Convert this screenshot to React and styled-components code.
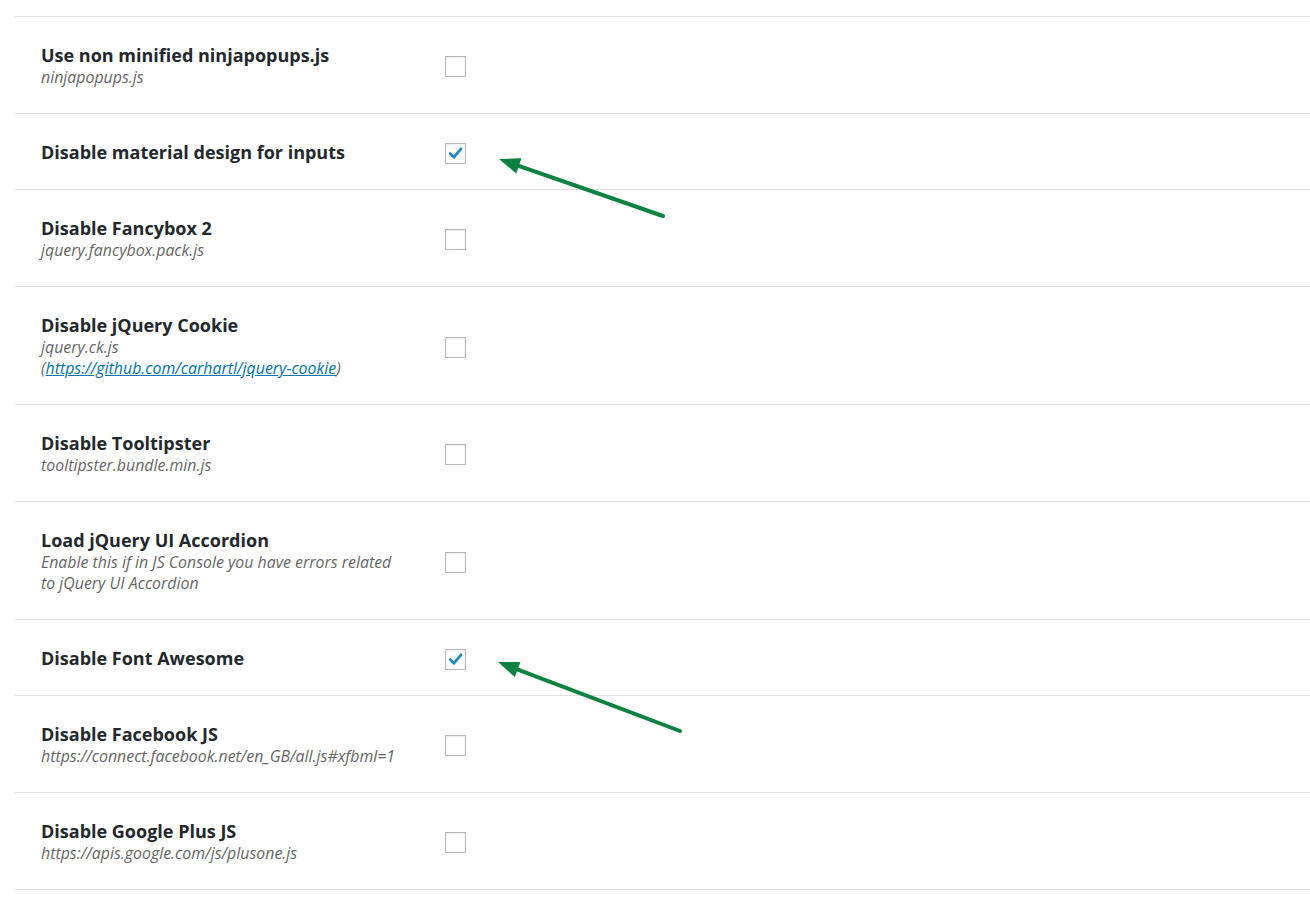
import React from "react";
import styled, { createGlobalStyle } from "styled-components";

const Global = createGlobalStyle`
  html, body { margin: 0; padding: 0; background: #ffffff; }
  body { font-family: "Open Sans", "Noto Sans", sans-serif; color: #23282d; }
`;

const Page = styled.div`
  position: relative;
  padding: 16px 0 0 15px;
  min-height: 902px;
  box-sizing: border-box;
`;

const Table = styled.div`
  border-bottom: 1px solid #e1e1e1;
`;

const Row = styled.div`
  display: grid;
  grid-template-columns: 430px 1fr;
  align-items: center;
  border-top: 1px solid #e1e1e1;
`;

const Label = styled.div`
  padding: 26px 0 25px 26px;
`;

const Title = styled.div`
  font-size: 18px;
  font-weight: 700;
  line-height: 24px;
  color: #23282d;
  white-space: nowrap;
`;

const Desc = styled.div`
  font-size: 15.9px;
  font-style: italic;
  line-height: 21px;
  color: #666666;
  max-width: 360px;
`;

const Link = styled.a`
  color: #0073aa;
  text-decoration: underline;
`;

const Box = styled.span`
  display: inline-flex;
  align-items: center;
  justify-content: center;
  width: 19px;
  height: 19px;
  margin-top: 3px;
  border: 1px solid #b4b9be;
  background: #ffffff;
  box-shadow: inset 0 1px 2px rgba(0, 0, 0, 0.07);
  justify-self: start;
`;

const Overlay = styled.svg`
  position: absolute;
  left: 0;
  top: 0;
  pointer-events: none;
`;

const Check = () => (
  <svg width="17" height="17" viewBox="0 0 17 17">
    <path d="M3.2 8.6 L7 12.2 L14 3.8" fill="none" stroke="#1e8cbe" strokeWidth="2.8" strokeLinecap="round" strokeLinejoin="round" />
  </svg>
);

const Checkbox = ({ checked }) => <Box>{checked ? <Check /> : null}</Box>;

const rows = [
  { title: "Use non minified ninjapopups.js", desc: "ninjapopups.js" },
  { title: "Disable material design for inputs", checked: true },
  { title: "Disable Fancybox 2", desc: "jquery.fancybox.pack.js" },
  {
    title: "Disable jQuery Cookie",
    desc: (
      <>
        jquery.ck.js
        <br />(
        <Link href="#">https://github.com/carhartl/jquery-cookie</Link>)
      </>
    ),
  },
  { title: "Disable Tooltipster", desc: "tooltipster.bundle.min.js" },
  {
    title: "Load jQuery UI Accordion",
    desc: "Enable this if in JS Console you have errors related to jQuery UI Accordion",
  },
  { title: "Disable Font Awesome", checked: true },
  { title: "Disable Facebook JS", desc: "https://connect.facebook.net/en_GB/all.js#xfbml=1" },
  { title: "Disable Google Plus JS", desc: "https://apis.google.com/js/plusone.js" },
];

const Arrow = ({ x1, y1, x2, y2 }) => {
  const dx = x2 - x1;
  const dy = y2 - y1;
  const len = Math.hypot(dx, dy);
  const ux = dx / len;
  const uy = dy / len;
  const hl = 21;
  const hw = 8;
  const bx = x2 - ux * hl;
  const by = y2 - uy * hl;
  const p1 = `${bx - uy * hw},${by + ux * hw}`;
  const p2 = `${bx + uy * hw},${by - ux * hw}`;
  return (
    <g>
      <line x1={x1} y1={y1} x2={bx + ux * 4} y2={by + uy * 4} stroke="#0b823f" strokeWidth="4" strokeLinecap="round" />
      <polygon points={`${x2},${y2} ${p1} ${p2}`} fill="#0b823f" />
    </g>
  );
};

export default function App() {
  return (
    <>
      <Global />
      <Page>
        <Table>
          {rows.map((r, i) => (
            <Row key={i}>
              <Label>
                <Title>{r.title}</Title>
                {r.desc ? <Desc>{r.desc}</Desc> : null}
              </Label>
              <Checkbox checked={r.checked} />
            </Row>
          ))}
        </Table>
        <Overlay width="1310" height="902">
          <Arrow x1={663} y1={216} x2={499} y2={159} />
          <Arrow x1={680} y1={731} x2={498} y2={662} />
        </Overlay>
      </Page>
    </>
  );
}
